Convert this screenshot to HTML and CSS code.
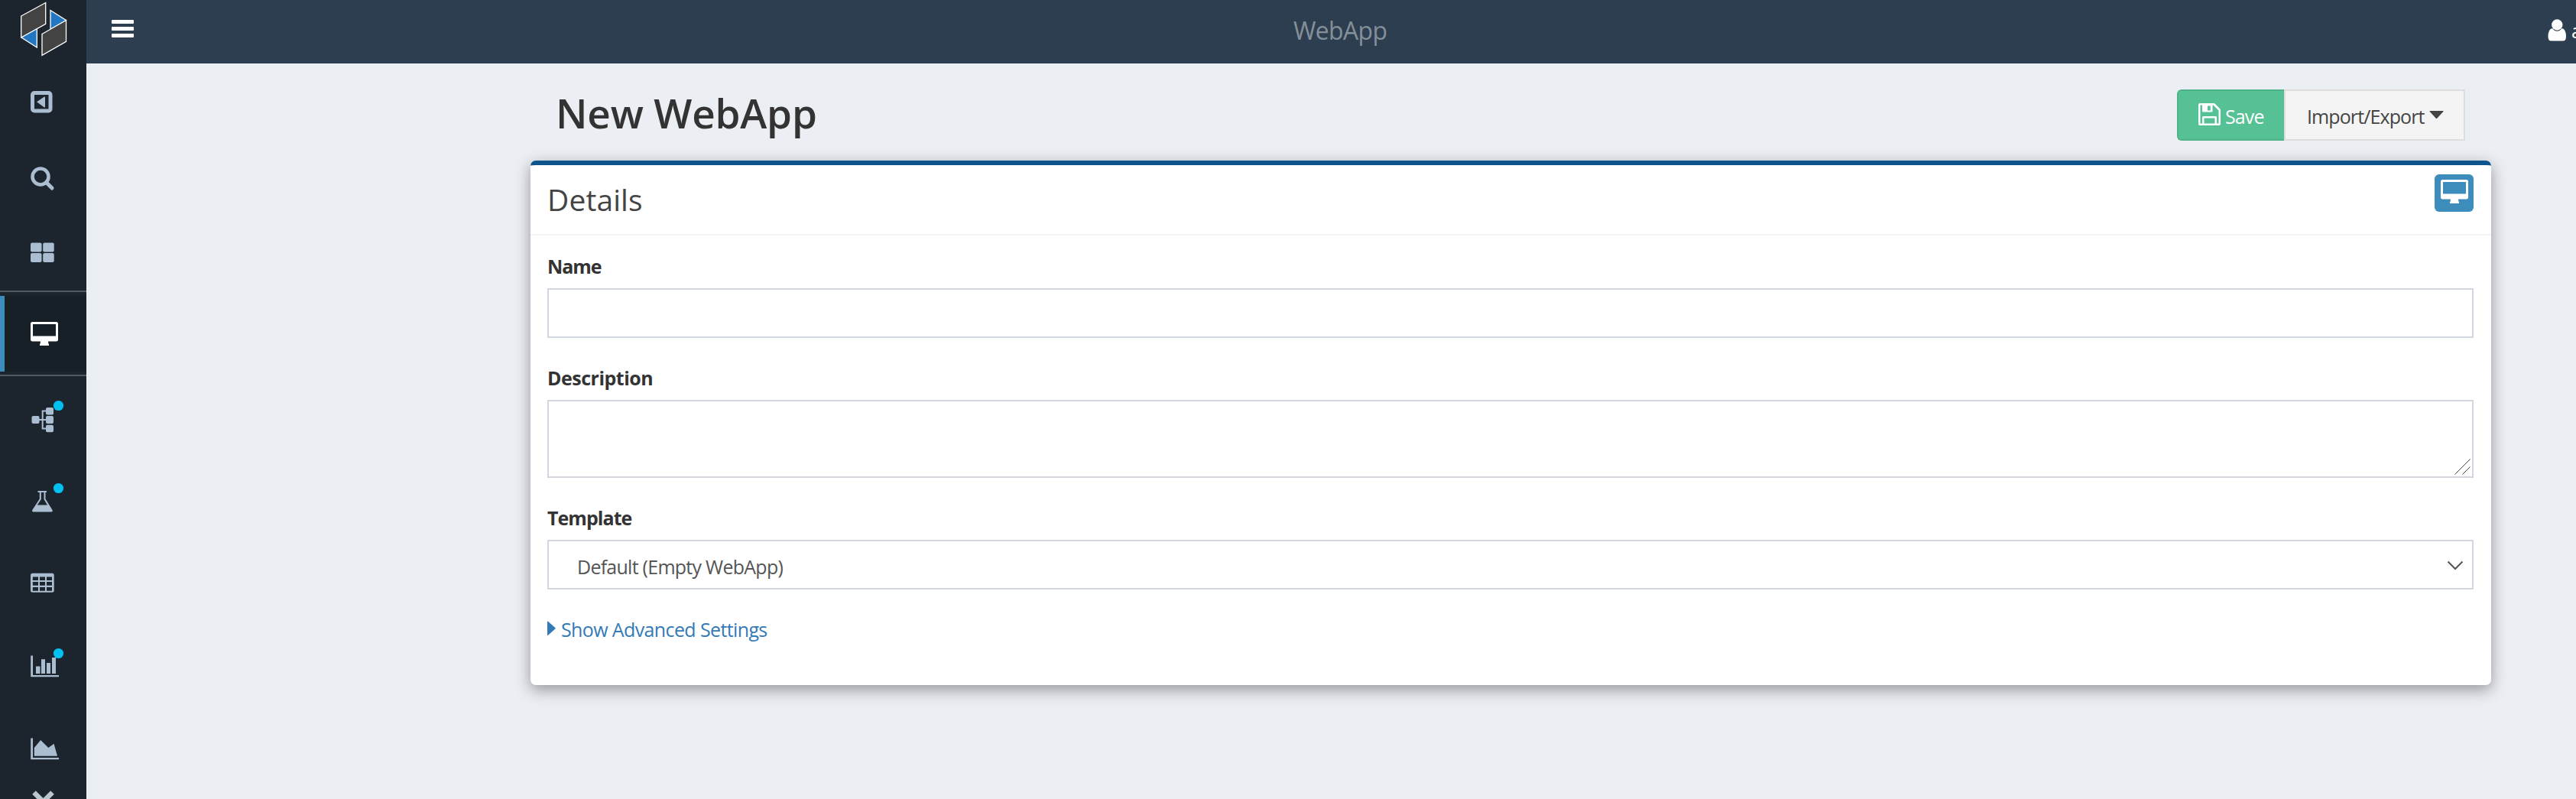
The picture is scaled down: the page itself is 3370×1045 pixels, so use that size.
FILE: index.html
```html
<!DOCTYPE html>
<html lang="en">
<head>
<meta charset="utf-8">
<title>WebApp</title>
<link rel="stylesheet" href="styles.css">
</head>
<body>
<svg class="defs" width="0" height="0" aria-hidden="true">
  <symbol id="monitor" viewBox="0 0 36 31">
    <path fill-rule="evenodd" d="M2.500 0H33.500Q36 0 36 2.500V23Q36 25.500 33.500 25.500H23Q23 28 24 29.500V31H12V29.500Q13 28 13 25.500H2.500Q0 25.500 0 23V2.500Q0 0 2.500 0ZM3 3V18.500H33V3Z"/>
  </symbol>
</svg>
<div class="app">
  <nav class="sidebar">
    <a class="logo" href="#"><svg width="113" height="83" viewBox="0 0 113 83" stroke="#fff" stroke-width="1.300">
      <path fill="#2277c0" d="M28 49L48.300 37V62ZM66 13.500L86.500 26.500L66 38.500Z"/>
      <path fill="#434343" d="M27.700 21L59.700 3.500V31.300L27.700 49ZM55 44.500L86.500 26.500V54.300L55 72.300Z"/></svg></a>
    <ul class="menu">
      <li class="item top"><svg viewBox="0 0 113 100"><rect x="42.500" y="38.500" width="23.500" height="23.500" rx="2.500" fill="none" stroke="currentColor" stroke-width="5"/><path d="M48 50.200L58 43.500Q59 43.500 59 44.500V56.500Q59 57.500 58 57.500Z"/></svg></li>
      <li class="item top"><svg viewBox="0 0 113 100" fill="none" stroke="currentColor"><circle cx="53" cy="48" r="10.500" stroke-width="4.600"/><path d="M60.500 55.500L68 63" stroke-width="5" stroke-linecap="round"/></svg></li>
      <li class="item last-top"><svg viewBox="0 0 113 97"><rect x="40" y="34.500" width="14.500" height="12" rx="2"/><rect x="56.200" y="34.500" width="14.500" height="12" rx="2"/><rect x="40" y="48" width="14.500" height="12" rx="2"/><rect x="56.200" y="48" width="14.500" height="12" rx="2"/></svg></li>
      <li class="item current"><div class="active"><svg class="monitor"><use href="#monitor"/></svg></div></li>
      <li class="item"><svg viewBox="0 0 113 108"><path d="M50 57H62M62 45.500H55.700V68.500H62" fill="none" stroke="currentColor" stroke-width="2"/><rect x="41.500" y="52" width="10" height="10" rx="2"/><rect x="60" y="41" width="10" height="9.500" rx="2"/><rect x="60" y="52" width="10" height="10" rx="2"/><rect x="60" y="63.700" width="10" height="9.500" rx="2"/><circle class="dot" cx="76.500" cy="38.500" r="6.600"/></svg></li>
      <li class="item"><svg viewBox="0 0 113 108"><path fill-rule="evenodd" d="M50 42H60.500Q61.200 42 61.200 43T60.500 44H59.500V52.500L68.200 66.500Q69.800 69.500 67 69.500H44Q41 69.500 42.600 66.500L51.800 52.500V44H50Q49.300 44 49.300 43T50 42ZM53.800 44V53L48.800 60.500H62L57.500 53V44Z"/><circle class="dot" cx="76.500" cy="38.500" r="6.600"/></svg></li>
      <li class="item"><svg viewBox="0 0 113 108"><path fill-rule="evenodd" d="M42.500 41.700H68.200Q70.700 41.700 70.700 44.200V64.300Q70.700 66.800 68.200 66.800H42.500Q40 66.800 40 64.300V44.200Q40 41.700 42.500 41.700ZM42.800 46.500V51H50V46.500ZM52 46.500V51H59V46.500ZM61 46.500V51H68V46.500ZM42.800 53V57.700H50V53ZM52 53V57.700H59V53ZM61 53V57.700H68V53ZM42.800 60V64.700H50V60ZM52 60V64.700H59V60ZM61 60V64.700H68V60Z"/></svg></li>
      <li class="item"><svg viewBox="0 0 113 108"><path d="M40.200 41.500H43V67H77V69.300H40.200ZM47 55.500H52.500V65H47ZM54 46.300H59V65H54ZM61 51H66V65H61ZM68 44H73V65H68Z"/><circle class="dot" cx="76.500" cy="38.500" r="6.600"/></svg></li>
      <li class="item"><svg viewBox="0 0 113 108"><path d="M40.200 41.500H43V67H77V69.300H40.200ZM44.800 64.800V54L53.200 44L63.300 54L70.500 48.700L75 64.800Z"/></svg></li>
      <li class="item tail"><svg viewBox="0 0 113 13"><path d="M44.500 4.500L56.500 16.500L68.500 4.500" fill="none" stroke="#b8c7ce" stroke-width="6.500"/></svg></li>
    </ul>
  </nav>
  <div class="main">
    <header class="navbar">
      <svg class="burger" width="29" height="23" fill="#fff"><rect width="29" height="5" rx="1"/><rect y="9" width="29" height="5" rx="1"/><rect y="18" width="29" height="5" rx="1"/></svg>
      <span class="app-title">WebApp</span>
      <div class="user"><svg width="25" height="29" viewBox="0 0 25 29" fill="#fff"><path d="M6 12Q8.500 15.700 12.300 15.700T18.600 12Q24 13 24 23Q24 28.500 20 28.500H4.500Q.5 28.500 .5 23Q.5 13 6 12Z"/><circle cx="12.300" cy="7.500" r="7.200"/></svg><span>admin</span></div>
    </header>
    <main class="content">
      <div class="title-row">
        <h1>New WebApp</h1>
        <div class="buttons">
          <button class="btn save"><svg width="29" height="29" viewBox="0 0 29 29"><path fill-rule="evenodd" d="M2 0H20Q21 0 22 1L28 7Q29 8 29 9.500V27Q29 29 27 29H2Q0 29 0 27V2Q0 0 2 0ZM2.500 2.500V26.500H5V18.500Q5 17 6.500 17H22.500Q24 17 24 18.500V26.500H26.500V9.500L19.500 2.500H18.500V10Q18.500 11.500 17 11.500H6.500Q5 11.500 5 10V2.500ZM12 3.500V9.500H15.800V3.500ZM7.500 19.500V26.500H21.500V19.500Z"/></svg><span>Save</span></button>
          <button class="btn export"><span>Import/Export</span><svg width="19" height="11"><path d="M1 0H18Q19 0 18.300 1L10.500 9.500Q9.500 10.500 8.500 9.500L.7 1Q0 0 1 0Z"/></svg></button>
        </div>
      </div>
      <section class="box">
        <div class="box-header"><h2>Details</h2><span class="badge"><svg class="monitor"><use href="#monitor"/></svg></span></div>
        <div class="box-body">
          <div class="group"><label class="name" for="name">Name</label><input id="name" class="control" type="text"></div>
          <div class="group"><label for="desc">Description</label><div class="control area" id="desc"><svg width="21" height="21" stroke="#444" stroke-width="1"><path d="M.5 20.500L20.500 .5M10.500 20.500L20.500 10.500"/></svg></div></div>
          <div class="group"><label class="template">Template</label><div class="control select"><span>Default (Empty WebApp)</span><svg width="22" height="13" fill="none" stroke="#555" stroke-width="2"><path d="M1.500 1.500L11 11L20.500 1.500"/></svg></div></div>
          <a class="advanced" href="#"><svg width="11" height="20"><path d="M0 1Q0 0 1 .7L10.300 9Q11 9.800 10.300 10.500L1 18.800Q0 19.500 0 18.500Z"/></svg><span>Show Advanced Settings</span></a>
        </div>
      </section>
    </main>
  </div>
</div>
</body>
</html>
```
FILE: styles.css
```css
* { box-sizing: border-box; }
body { margin: 0; background: #ebeef3; color: #333; font: 25px/36px "Open Sans", "Noto Sans", sans-serif; overflow: hidden; }
h1, h2, ul { margin: 0; padding: 0; }
svg { display: block; fill: currentColor; flex: none; }
svg[fill="none"] { fill: none; }
.defs { position: absolute; }
.app { display: flex; height: 1045px; overflow: hidden; }

.sidebar { width: 113px; flex: none; background: #1c252e; color: #abbdd0; }
.logo { display: block; height: 83px; }
.menu { list-style: none; }
.item { height: 108px; }
.item > svg { width: 113px; height: 100%; }
.item.top { height: 100px; }
.item.last-top { height: 97px; }
.item.tail { height: 13px; }
.item.current { height: 112px; padding: 5px 0 4px; border-top: 2px solid #535c63; border-bottom: 2px solid #535c63; }
.active { height: 99px; border-left: 6px solid #3c8dbc; background: #172027; color: #fff; padding: 34px 0 0 34px; }
.monitor { width: 36px; height: 31px; }
.dot { fill: #00c0ef; }

.main { flex: 1; min-width: 0; }
.navbar { height: 83px; background: #2c3e50; color: #fff; display: flex; align-items: center; justify-content: space-between; padding-left: 33px; overflow: hidden; }
.burger { margin-bottom: 8px; }
.app-title { font-size: 32px; letter-spacing: -.7px; color: #858f99; margin: 0 auto 4px 1517px; }
.user { width: 37px; display: flex; gap: 6px; align-items: center; margin-top: -4px; }

.content { width: 2565px; margin: 0 0 0 581px; }
.title-row { height: 127px; display: flex; justify-content: space-between; padding: 34px 34px 0 33px; }
h1 { font-size: 53px; line-height: 62px; font-weight: 540; letter-spacing: -.2px; }
.buttons { display: flex; height: 67px; }
.btn { font: inherit; letter-spacing: -.9px; display: flex; border: 2px solid #ddd; background: #f4f4f4; color: #444; padding: 0; }
.btn span { margin-top: 15px; }
.save { width: 140px; background: #55c194; border-color: #4fb289; border-right: 0; border-radius: 6px 0 0 6px; color: #fff; padding-left: 26px; gap: 6px; }
.save svg { margin-top: 16px; }
.export { width: 237px; padding-left: 28px; gap: 6px; }
.export svg { margin-top: 26px; }

.box { height: 686px; border-top: 6px solid #0f558d; border-radius: 7px; background: #fff; box-shadow: 0 6px 20px rgba(0, 0, 0, .38); }
.box-header { height: 92px; border-bottom: 2px solid #f4f4f4; display: flex; justify-content: space-between; padding: 12px 23px 0 22px; }
h2 { font-size: 39px; line-height: 65px; font-weight: 530; letter-spacing: .1px; color: #444; }
.badge { width: 51px; height: 49px; border-radius: 6px; background: #3c8dbc; color: #fff; padding: 7px 0 0 8px; }
.box-body { padding: 22px 23px 0 22px; }
.group { margin-bottom: 34px; }
label { display: block; margin-bottom: 11px; font-weight: 670; letter-spacing: -.5px; }
label.name { letter-spacing: -1.1px; }
label.template { letter-spacing: -.95px; }
.control { display: block; width: 100%; height: 65px; border: 2px solid #d2d6de; background: #fff; border-radius: 0; padding: 0; }
.area { height: 102px; display: flex; justify-content: flex-end; align-items: flex-end; padding: 2px; }
.select { color: #555; display: flex; justify-content: space-between; padding: 15px 11px 0 37px; letter-spacing: -.74px; }
.select svg { margin-top: 10px; }
.advanced { display: flex; gap: 7px; color: #337ab7; text-decoration: none; letter-spacing: -.62px; }
.advanced svg { margin-top: 7px; }
```
